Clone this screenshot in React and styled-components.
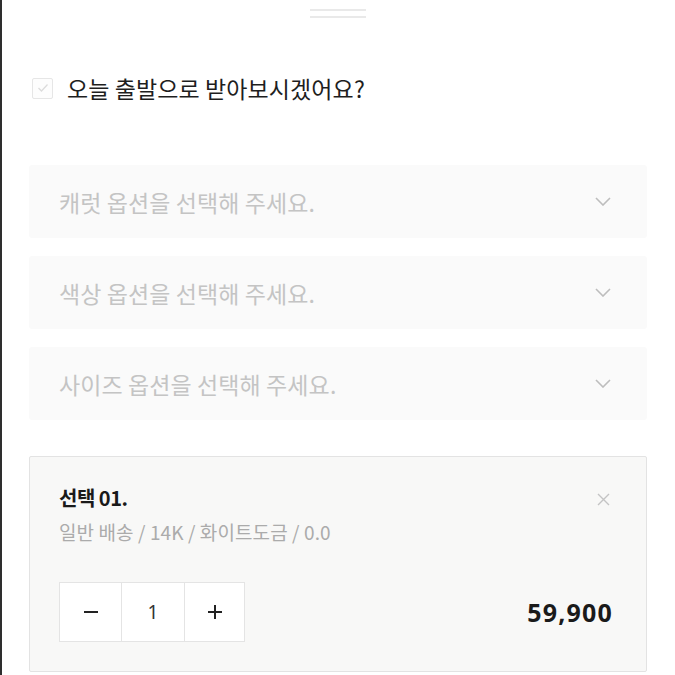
import React from 'react';
import styled, { createGlobalStyle } from 'styled-components';

const GlobalStyle = createGlobalStyle`
  html, body {
    margin: 0;
    padding: 0;
    background: #fff;
  }
  * {
    box-sizing: border-box;
  }
  body {
    font-family: 'Noto Sans CJK KR', 'Noto Sans', sans-serif;
  }
`;

const Sheet = styled.div`
  display: flex;
  flex-direction: column;
  height: 675px;
  overflow: hidden;
  border-left: 2px solid #2e2e2e;
  padding: 0 28px 0 27px;
  background: #fff;
`;

const Handle = styled.div`
  align-self: center;
  display: flex;
  flex-direction: column;
  gap: 5px;
  width: 56px;
  margin: 9px 0 0 0;
  span {
    display: block;
    height: 2px;
    background: #e9e9e9;
  }
`;

const CheckRow = styled.label`
  display: flex;
  align-items: center;
  gap: 14px;
  margin: 58px 0 0 3px;
  height: 24px;
`;

const CheckBox = styled.span`
  display: flex;
  align-items: center;
  justify-content: center;
  width: 21px;
  height: 21px;
  border: 1px solid #e6e6e6;
  border-radius: 2px;
  background: #fdfdfd;
`;

const CheckLabel = styled.span`
  font-size: 23px;
  color: #1e1e1e;
  letter-spacing: 0.1px;
  line-height: 1;
`;

const SelectList = styled.div`
  display: flex;
  flex-direction: column;
  gap: 18px;
  margin-top: 65px;
`;

const SelectBox = styled.div`
  display: flex;
  align-items: center;
  justify-content: space-between;
  height: 73px;
  padding: 0 36px 0 30px;
  background: #fafafa;
  border-radius: 3px;
`;

const SelectText = styled.span`
  font-size: 23px;
  color: #c4c4c4;
  letter-spacing: 0.1px;
`;

const OptionCard = styled.div`
  display: flex;
  flex-direction: column;
  margin-top: 36px;
  height: 216px;
  padding: 26px 29px 0 29px;
  background: #f8f8f7;
  border: 1px solid #e3e3e3;
  border-radius: 2px;
`;

const CardHead = styled.div`
  display: flex;
  justify-content: space-between;
  align-items: center;
`;

const CardTitle = styled.span`
  font-size: 20px;
  font-weight: 700;
  color: #1a1a1a;
  letter-spacing: -0.5px;
`;

const CloseButton = styled.button`
  display: flex;
  border: none;
  background: none;
  padding: 0;
  margin: 3px 7px 0 0;
`;

const CardDesc = styled.div`
  margin-top: 6px;
  font-size: 19px;
  color: #ababab;
  letter-spacing: 0.1px;
`;

const CardFoot = styled.div`
  display: flex;
  justify-content: space-between;
  align-items: center;
  margin-top: 37px;
`;

const Stepper = styled.div`
  display: flex;
  height: 60px;
  border: 1px solid #e4e4e4;
  background: #fff;
`;

const StepCell = styled.div`
  display: flex;
  align-items: center;
  justify-content: center;
  width: ${({ w }) => w}px;
  border-left: ${({ first }) => (first ? 'none' : '1px solid #e4e4e4')};
  font-size: 19px;
  color: #333;
  font-family: 'Noto Sans', sans-serif;
`;

const Price = styled.span`
  font-family: 'Noto Sans', sans-serif;
  font-size: 25px;
  font-weight: 700;
  color: #1a1a1a;
  letter-spacing: 1.2px;
  margin-right: 4px;
`;

const Chevron = () => (
  <svg width="16" height="9" viewBox="0 0 16 9">
    <path d="M1 1l7 7 7-7" fill="none" stroke="#bdbdbd" strokeWidth="1.6" />
  </svg>
);

const options = ['캐럿 옵션을 선택해 주세요.', '색상 옵션을 선택해 주세요.', '사이즈 옵션을 선택해 주세요.'];

export default function App() {
  return (
    <>
      <GlobalStyle />
      <Sheet>
        <Handle>
          <span />
          <span />
        </Handle>

        <CheckRow>
          <CheckBox>
            <svg width="12" height="10" viewBox="0 0 12 10">
              <path d="M1.5 5l3 3 6-6.5" fill="none" stroke="#dcdcdc" strokeWidth="1.3" />
            </svg>
          </CheckBox>
          <CheckLabel>오늘 출발으로 받아보시겠어요?</CheckLabel>
        </CheckRow>

        <SelectList>
          {options.map((o) => (
            <SelectBox key={o}>
              <SelectText>{o}</SelectText>
              <Chevron />
            </SelectBox>
          ))}
        </SelectList>

        <OptionCard>
          <CardHead>
            <CardTitle>선택 01.</CardTitle>
            <CloseButton>
              <svg width="13" height="13" viewBox="0 0 13 13">
                <path d="M1 1l11 11M12 1L1 12" stroke="#c4c4c4" strokeWidth="1.4" />
              </svg>
            </CloseButton>
          </CardHead>
          <CardDesc>일반 배송 / 14K / 화이트도금 / 0.0</CardDesc>
          <CardFoot>
            <Stepper>
              <StepCell w={61} first>
                <svg width="14" height="2" viewBox="0 0 14 2">
                  <rect width="14" height="2" fill="#222" />
                </svg>
              </StepCell>
              <StepCell w={63}>1</StepCell>
              <StepCell w={60}>
                <svg width="14" height="14" viewBox="0 0 14 14">
                  <path d="M7 0v14M0 7h14" stroke="#222" strokeWidth="2" />
                </svg>
              </StepCell>
            </Stepper>
            <Price>59,900</Price>
          </CardFoot>
        </OptionCard>
      </Sheet>
    </>
  );
}
